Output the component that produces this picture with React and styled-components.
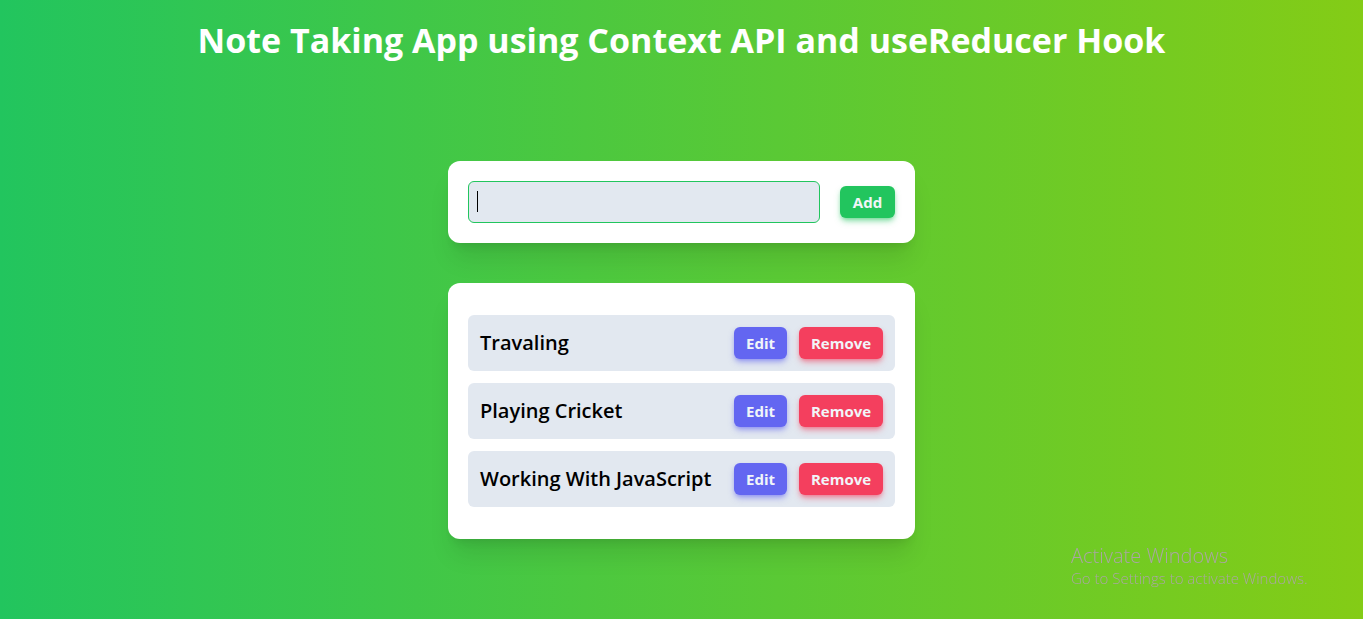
import React, { useState } from "react";
import styled, { createGlobalStyle } from "styled-components";

const GlobalStyle = createGlobalStyle`
  *, *::before, *::after { box-sizing: border-box; }
  body {
    margin: 0;
    font-family: "Segoe UI", "Open Sans", "Noto Sans", sans-serif;
    font-size: 16px;
    line-height: 24px;
    color: #000;
  }
`;

const Page = styled.div`
  min-height: 100vh;
  background: linear-gradient(to right, #22c55e, #84cc16);
`;

const Header = styled.header`
  padding: 20px;
  text-align: center;
`;

const Title = styled.h1`
  margin: 0;
  font-size: 34px;
  line-height: 40px;
  font-weight: 700;
  color: #fff;
`;

const Main = styled.main`
  display: flex;
  flex-direction: column;
  gap: 40px;
  width: 100%;
  max-width: 467px;
  margin: 0 auto;
  padding: 81px 0 80px;
`;

const Card = styled.section`
  padding: ${(p) => (p.$roomy ? "32px 20px" : "20px")};
  border-radius: 12px;
  background: #fff;
  box-shadow: 0 20px 25px -5px rgba(0, 0, 0, 0.1), 0 8px 10px -6px rgba(0, 0, 0, 0.1);
`;

const NoteForm = styled.form`
  display: flex;
  align-items: center;
  gap: 20px;
`;

const Field = styled.label`
  position: relative;
  display: flex;
  flex: 1;
`;

const TextInput = styled.input`
  width: 100%;
  height: 42px;
  padding: 8px;
  border: 1px solid #22c55e;
  border-radius: 6px;
  outline: none;
  background: #e2e8f0;
  font: inherit;
  caret-color: transparent;
`;

const Caret = styled.span`
  position: absolute;
  top: 10px;
  left: 9px;
  width: 1px;
  height: 21px;
  background: #000;
  pointer-events: none;
`;

const tones = {
  green: ["#22c55e", "rgba(34, 197, 94, 0.5)"],
  indigo: ["#6366f1", "rgba(99, 102, 241, 0.5)"],
  rose: ["#f43f5e", "rgba(244, 63, 94, 0.5)"],
};

const Button = styled.button`
  flex: none;
  width: ${(p) => p.$width}px;
  height: 32px;
  padding: 0;
  border: 0;
  border-radius: 6px;
  background: ${(p) => tones[p.$tone][0]};
  box-shadow: 0 4px 6px -1px ${(p) => tones[p.$tone][1]}, 0 2px 4px -2px ${(p) => tones[p.$tone][1]};
  color: #f1f5f9;
  font: inherit;
  font-size: 15px;
  font-weight: 700;
  cursor: pointer;
`;

const NoteList = styled.ul`
  display: flex;
  flex-direction: column;
  gap: 12px;
  margin: 0;
  padding: 0;
  list-style: none;
`;

const NoteRow = styled.li`
  display: flex;
  align-items: center;
  justify-content: space-between;
  padding: 12px;
  border-radius: 6px;
  background: #e2e8f0;
`;

const NoteTitle = styled.h2`
  margin: 0;
  font-size: 20px;
  line-height: 28px;
  font-weight: 600;
  white-space: nowrap;
`;

const Actions = styled.div`
  display: flex;
  gap: 12px;
`;

const Watermark = styled.aside`
  position: fixed;
  right: 56px;
  bottom: 31px;
  width: 236px;
  color: #aaa5a5;
  font-weight: 300;
  white-space: nowrap;
  pointer-events: none;
`;

const WatermarkTitle = styled.p`
  margin: 0;
  font-size: 20px;
  line-height: 24px;
`;

const WatermarkText = styled.p`
  margin: 0;
  font-size: 15px;
  line-height: 20px;
`;

export default function App() {
  const [notes, setNotes] = useState(["Travaling", "Playing Cricket", "Working With JavaScript"]);
  const [draft, setDraft] = useState("");

  const addNote = (event) => {
    event.preventDefault();
    if (!draft.trim()) return;
    setNotes([...notes, draft.trim()]);
    setDraft("");
  };

  const removeNote = (index) => setNotes(notes.filter((_, i) => i !== index));

  const editNote = (index) => {
    setDraft(notes[index]);
    removeNote(index);
  };

  return (
    <Page>
      <GlobalStyle />
      <Header>
        <Title>Note Taking App using Context API and useReducer Hook</Title>
      </Header>
      <Main>
        <Card>
          <NoteForm onSubmit={addNote}>
            <Field>
              <TextInput
                type="text"
                aria-label="Note"
                autoFocus
                value={draft}
                onChange={(event) => setDraft(event.target.value)}
              />
              {draft === "" && <Caret />}
            </Field>
            <Button type="submit" $tone="green" $width={55}>Add</Button>
          </NoteForm>
        </Card>
        <Card $roomy>
          <NoteList>
            {notes.map((note, index) => (
              <NoteRow key={note}>
                <NoteTitle>{note}</NoteTitle>
                <Actions>
                  <Button type="button" $tone="indigo" $width={53} onClick={() => editNote(index)}>Edit</Button>
                  <Button type="button" $tone="rose" $width={84} onClick={() => removeNote(index)}>Remove</Button>
                </Actions>
              </NoteRow>
            ))}
          </NoteList>
        </Card>
      </Main>
      <Watermark>
        <WatermarkTitle>Activate Windows</WatermarkTitle>
        <WatermarkText>Go to Settings to activate Windows.</WatermarkText>
      </Watermark>
    </Page>
  );
}
